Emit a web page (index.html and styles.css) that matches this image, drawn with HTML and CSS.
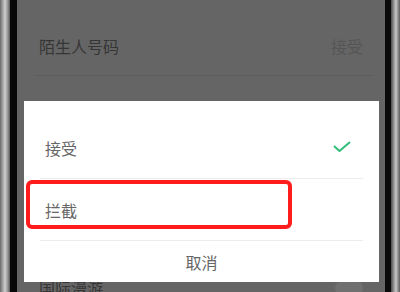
FILE: index.html
```html
<!DOCTYPE html>
<html lang="zh-CN">
<head>
    <meta charset="UTF-8">
    <meta name="viewport" content="width=device-width, initial-scale=1.0">
    <title>陌生人号码</title>
    <link rel="stylesheet" href="styles.css">
</head>
<body>
<div class="phone">
    <div class="bezel-left"></div>
    <div class="edge-left"></div>

    <!-- Screen (dimmed behind the sheet) -->
    <div class="screen">
        <div class="setting-row">
            <span class="setting-name">陌生人号码</span>
            <span class="setting-value">接受</span>
        </div>
        <div class="spacer"></div>
        <div class="setting-row bottom-row">
            <span class="setting-name">国际漫游</span>
            <span class="toggle"></span>
        </div>

        <!-- Choice sheet -->
        <div class="sheet">
            <div class="option">
                <span>接受</span>
                <svg class="check" width="18" height="11" viewBox="0 0 18 11">
                    <path d="M1 5 L6.5 10 L17 1" fill="none" stroke="#2fbf78" stroke-width="2"/>
                </svg>
            </div>
            <div class="option">
                <span>拦截</span>
            </div>
            <div class="cancel">取消</div>
        </div>

        <div class="highlight"></div>
    </div>

    <div class="edge-right"></div>
    <div class="bezel-right"></div>
</div>
</body>
</html>
```

FILE: styles.css
```css
body {
    margin: 0;
    font-family: "Noto Sans CJK SC", "Noto Sans", sans-serif;
    background: #5f5f5f;
}

.phone {
    display: flex;
    width: 400px;
    height: 292px;
    overflow: hidden;
}

/* Phone frame */
.bezel-left {
    width: 10px;
    background: linear-gradient(to right, #6a6a6a, #a8a8a8 30%, #cfcfcf 50%, #9a9a9a 75%, #5a5a5a);
}
.edge-left {
    width: 7px;
    background: #080808;
}
.edge-right {
    width: 6px;
    background: #0a0a0a;
}
.bezel-right {
    width: 9px;
    background: linear-gradient(to right, #4a4a4a, #9c9c9c 35%, #c8c8c8 55%, #8a8a8a 80%, #5a5a5a);
}

/* Screen */
.screen {
    position: relative;
    flex: 1;
    background: #656565;
    display: flex;
    flex-direction: column;
}

.setting-row {
    display: flex;
    justify-content: space-between;
    align-items: center;
    height: 76px;
    padding: 0 22px 0 22px;
    border-bottom: 1px solid #5e5e5e;
    margin: 0 12px 0 18px;
    padding-left: 4px;
    padding-right: 10px;
    box-sizing: border-box;
    padding-top: 16px;
}
.setting-name {
    font-size: 16px;
    color: #363636;
}
.setting-value {
    font-size: 16px;
    color: #555;
}
.spacer {
    flex: 1;
}
.bottom-row {
    height: 20px;
    align-items: flex-start;
    padding-top: 5px;
    border-bottom: none;
}
.bottom-row .setting-name {
    line-height: 20px;
}
.toggle {
    width: 28px;
    height: 14px;
    margin-top: 4px;
    border-radius: 7px;
    background: #707070;
}

/* Sheet */
.sheet {
    position: absolute;
    left: 7px;
    top: 101px;
    width: 355px;
    height: 181px;
    background: #fff;
    box-sizing: border-box;
    padding-top: 16px;
    display: flex;
    flex-direction: column;
}
.option {
    display: flex;
    justify-content: space-between;
    align-items: center;
    height: 62px;
    margin: 0 16px;
    padding: 0 12px 0 5px;
    border-bottom: 1px solid #ececec;
    box-sizing: border-box;
    font-size: 16px;
    color: #666;
}
.option:first-child {
    height: 62px;
}
.check {
    margin-top: -2px;
}
.cancel {
    flex: 1;
    display: flex;
    align-items: center;
    justify-content: center;
    font-size: 16px;
    color: #666;
}

.highlight {
    position: absolute;
    left: 9px;
    top: 180px;
    width: 266px;
    height: 49px;
    box-sizing: border-box;
    border: 4px solid #ff1c1c;
    border-radius: 6px;
}
```
